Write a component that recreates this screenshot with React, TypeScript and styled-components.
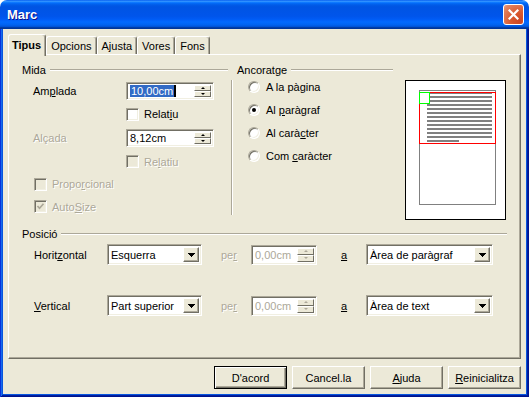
import React from 'react';
import styled, {createGlobalStyle} from 'styled-components';

const GlobalStyle = createGlobalStyle`
  html, body {
    margin: 0;
    padding: 0;
    background: #fff;
  }
  body {
    font-family: "Liberation Sans", Arial, sans-serif;
    font-size: 11px;
    color: #000;
  }
  * {
    box-sizing: border-box;
  }
`

const Window = styled.div`
  width: 529px;
  height: 397px;
  display: flex;
  flex-direction: column;
  border-radius: 7px 7px 0 0;
  overflow: hidden;
`

const TitleBar = styled.div`
  flex: none;
  height: 29px;
  display: flex;
  align-items: center;
  justify-content: space-between;
  padding: 0 5px 0 7px;
  background: linear-gradient(to bottom, #0058ee 0%, #3593ff 4%, #288eff 6%, #127dff 8%, #036ffc 10%, #0262ee 14%, #0057e5 20%, #0054e3 24%, #0055eb 56%, #005bf5 66%, #026afe 76%, #0062ef 86%, #0052d6 92%, #0040ab 94%, #003092 100%);
`

const Title = styled.span`
  color: #fff;
  font-family: "Liberation Sans", Arial, sans-serif;
  font-size: 13px;
  font-weight: 700;
  text-shadow: 1px 1px 0 #0f1089;
  padding-bottom: 1px;
`

const CloseButton = styled.div`
  width: 21px;
  height: 21px;
  display: flex;
  align-items: center;
  justify-content: center;
  border: 1px solid #fff;
  border-radius: 3px;
  background: radial-gradient(circle at 85% 85%, #cc4624 0%, #d9582d 40%, #e38462 85%, #f0a48a 100%);
`

const Frame = styled.div`
  flex: 1;
  display: flex;
  padding: 0 3px 3px 3px;
  background: #0855dd;
  box-shadow: inset 1px 0 #0831d9, inset -1px 0 #00138c, inset 0 -1px #00138c,
  inset 2px 0 #166aee, inset -2px 0 #001ea0, inset 0 -2px #001ea0;
`

const Body = styled.div`
  flex: 1;
  display: flex;
  flex-direction: column;
  padding: 5px;
  background: #ece9d8;
`

const TabStrip = styled.div`
  flex: none;
  height: 20px;
  display: flex;
  align-items: flex-end;
  position: relative;
  z-index: 1;
`

const Tab = styled.div<{ $active?: boolean }>`
  height: ${p => (p.$active ? 22 : 18)}px;
  margin-bottom: ${p => (p.$active ? -2 : 0)}px;
  padding: ${p => (p.$active ? '0 4px 2px 3px' : '0 4px')};
  display: flex;
  align-items: center;
  background: #ece9d8;
  border-top: 1px solid #fff;
  border-left: 1px solid #fff;
  border-right: 1px solid #716f64;
  box-shadow: inset -1px 0 #aca899;
  border-radius: 3px 3px 0 0;
  font-weight: ${p => (p.$active ? 700 : 400)};
`

const Panel = styled.div`
  flex: 1;
  display: flex;
  flex-direction: column;
  padding: 8px 13px 0 13px;
  background: #ece9d8;
  border: 1px solid;
  border-color: #fff #716f64 #716f64 #fff;
  box-shadow: inset -1px -1px #aca899;
`

const TopSection = styled.div`
  display: flex;
  align-items: flex-start;
`

const Group = styled.div<{ $width?: number }>`
  display: flex;
  flex-direction: column;
  width: ${p => (p.$width ? `${p.$width}px` : 'auto')};
`

const GroupHeader = styled.div<{ $indent?: number }>`
  height: 13px;
  display: flex;
  align-items: center;
  gap: 4px;
  padding-left: ${p => p.$indent || 0}px;
`

const EtchedLine = styled.div`
  flex: 1;
  height: 2px;
  border-top: 1px solid #aca899;
  border-bottom: 1px solid #fff;
`

const MidaGrid = styled.div`
  margin-top: 4px;
  display: grid;
  grid-template-columns: 104px 88px;
  grid-template-rows: 22px 24px 24px 23px 22px 23px;
  align-items: center;
`

const FieldCell = styled.div`
  grid-column: 2;
`

const WideCell = styled.div`
  grid-column: 1 / -1;
  padding-left: 12px;
`

const Label = styled.span<{ $disabled?: boolean; $indent?: number }>`
  padding-left: ${p => p.$indent || 0}px;
  color: ${p => (p.$disabled ? '#aca899' : '#000')};
  text-shadow: ${p => (p.$disabled ? '1px 1px 0 #fff' : 'none')};
  white-space: nowrap;
`

const Mn = styled.span`
  text-decoration: underline;
`

const Sunken = styled.div<{ $w: number; $h: number }>`
  width: ${p => p.$w}px;
  height: ${p => p.$h}px;
  display: flex;
  align-items: stretch;
  padding: 2px;
  background: #fff;
  border: 1px solid;
  border-color: #aca899 #fff #fff #aca899;
  box-shadow: inset 1px 1px #716f64, inset -1px -1px #f1efe2;
`

const FieldText = styled.div<{ $disabled?: boolean }>`
  flex: 1;
  display: flex;
  align-items: center;
  padding-left: 1px;
  color: ${p => (p.$disabled ? '#aca899' : '#000')};
  white-space: nowrap;
  overflow: hidden;
`

const Selected = styled.span`
  display: inline-block;
  line-height: 14px;
  padding: 0 1px;
  background: #316ac5;
  color: #fff;
`

const Caret = styled.span`
  display: inline-block;
  width: 2px;
  height: 14px;
  background: #000;
`

const SpinButtons = styled.div`
  width: 17px;
  display: flex;
  flex-direction: column;
`

const SpinArrow = styled.div<{ $down?: boolean; $disabled?: boolean }>`
  flex: 1;
  display: flex;
  align-items: center;
  justify-content: center;
  background: #ece9d8;
  border: 1px solid;
  border-color: #fff #716f64 #716f64 #fff;

  &::after {
    content: '';
    border-left: 2px solid transparent;
    border-right: 2px solid transparent;
    ${p => (p.$down ? 'border-top' : 'border-bottom')}: 2px solid ${p => (p.$disabled ? '#aca899' : '#000')};
  }
`

const DropButton = styled.div`
  width: 16px;
  display: flex;
  align-items: center;
  justify-content: center;
  background: #ece9d8;
  border: 1px solid;
  border-color: #fff #716f64 #716f64 #fff;
  box-shadow: inset -1px -1px #aca899;
`

const CheckRow = styled.div`
  display: flex;
  align-items: center;
  gap: 5px;
`

const CheckBox = styled.span<{ $disabled?: boolean }>`
  width: 13px;
  height: 13px;
  flex: none;
  display: flex;
  align-items: center;
  justify-content: center;
  background: ${p => (p.$disabled ? '#ece9d8' : '#fff')};
  border: 1px solid;
  border-color: #aca899 #fff #fff #aca899;
  box-shadow: inset 1px 1px #716f64, inset -1px -1px #f1efe2;
`

const AnchorGroup = styled(Group)`
  margin-left: 3px;
`

const AnchorBody = styled.div`
  margin-top: 4px;
  height: 135px;
  display: flex;
  flex-direction: column;
  gap: 9px;
  padding-left: 16px;
  border-left: 1px solid #aca899;
  box-shadow: inset 1px 0 #fff;
`

const RadioRow = styled.div`
  height: 14px;
  display: flex;
  align-items: center;
  gap: 6px;
`

const Radio = styled.span<{ $checked?: boolean }>`
  width: 12px;
  height: 12px;
  flex: none;
  display: flex;
  align-items: center;
  justify-content: center;
  border-radius: 50%;
  background: #fff;
  border: 1px solid;
  border-color: #aca899 #fff #fff #aca899;
  box-shadow: inset 1px 1px #716f64, inset -1px -1px #f1efe2;

  &::after {
    content: '';
    display: ${p => (p.$checked ? 'block' : 'none')};
    width: 4px;
    height: 4px;
    border-radius: 50%;
    background: #000;
  }
`

const Preview = styled.div`
  margin: 17px 0 0 12px;
  width: 101px;
  height: 140px;
  background: #fff;
  border: 1px solid #000;
  display: flex;
`

const PositionGroup = styled(Group)`
  margin-top: 7px;
`

const PosGrid = styled.div`
  margin-top: 4px;
  display: grid;
  grid-template-columns: 85px 95px 49px 66px 49px 127px;
  grid-template-rows: 21px 21px;
  row-gap: 30px;
  align-items: center;
`

const ButtonRow = styled.div`
  flex: none;
  height: 23px;
  margin-top: 7px;
  display: flex;
  justify-content: flex-end;
  gap: 5px;
`

const Button = styled.button<{ $default?: boolean }>`
  width: 73px;
  height: 23px;
  padding: 0;
  font: inherit;
  color: #000;
  background: #ece9d8;
  border: 1px solid;
  border-color: ${p => (p.$default ? '#000' : '#fff #716f64 #716f64 #fff')};
  box-shadow: ${p => (p.$default
    ? 'inset 1px 1px #fff, inset -1px -1px #716f64, inset -2px -2px #aca899'
    : 'inset -1px -1px #aca899')};
`

const Arrow = () => (
  <svg width="7" height="4" viewBox="0 0 7 4">
    <polygon points="0,0 7,0 3.5,4" fill="#000" shapeRendering="crispEdges"/>
  </svg>
)

const Check = () => (
  <svg width="9" height="9" viewBox="0 0 9 9">
    <polyline points="1.5,4 3.5,6.2 7.5,1.8" fill="none" stroke="#aca899" strokeWidth="1.7"/>
  </svg>
)

const Spin = ({w, h, disabled, children}: { w: number; h: number; disabled?: boolean; children: React.ReactNode }) => (
  <Sunken $w={w} $h={h}>
    <FieldText $disabled={disabled}>{children}</FieldText>
    <SpinButtons>
      <SpinArrow $disabled={disabled}/>
      <SpinArrow $down $disabled={disabled}/>
    </SpinButtons>
  </Sunken>
)

const Combo = ({w, children}: { w: number; children: React.ReactNode }) => (
  <Sunken $w={w} $h={21}>
    <FieldText>{children}</FieldText>
    <DropButton><Arrow/></DropButton>
  </Sunken>
)

const PageDrawing = () => {
  const lines = Array.from({length: 13}, (_, i) => i)
  return (
    <svg width="99" height="138" viewBox="0 0 99 138">
      <rect x="13.5" y="9.5" width="76" height="114" fill="none" stroke="#808080"/>
      {lines.map(i => (
        <rect key={i} x="21" y={11 + i * 4} width={i === 12 ? 32 : 65} height="2" fill="#808080"/>
      ))}
      <rect x="13.5" y="11.5" width="76" height="51" fill="none" stroke="#ff0000"/>
      <rect x="13.5" y="11.5" width="10" height="11" fill="#fff" stroke="#00ff00"/>
    </svg>
  )
}

export default function App() {
  return (
    <>
      <GlobalStyle/>
      <Window>
        <TitleBar>
          <Title>Marc</Title>
          <CloseButton>
            <svg width="11" height="11" viewBox="0 0 11 11">
              <path d="M1.5 1.5 L9.5 9.5 M9.5 1.5 L1.5 9.5" stroke="#fff" strokeWidth="2.2" strokeLinecap="square"/>
            </svg>
          </CloseButton>
        </TitleBar>
        <Frame>
          <Body>
            <TabStrip>
              <Tab $active>Tipus</Tab>
              <Tab>Opcions</Tab>
              <Tab>Ajusta</Tab>
              <Tab>Vores</Tab>
              <Tab>Fons</Tab>
            </TabStrip>
            <Panel>
              <TopSection>
                <Group $width={206}>
                  <GroupHeader>
                    <span>Mida</span>
                    <EtchedLine/>
                  </GroupHeader>
                  <MidaGrid>
                    <Label $indent={11}>Am<Mn>p</Mn>lada</Label>
                    <Spin w={88} h={18}><Selected>10,00cm</Selected><Caret/></Spin>
                    <FieldCell>
                      <CheckRow>
                        <CheckBox/>
                        <Label>Relat<Mn>i</Mn>u</Label>
                      </CheckRow>
                    </FieldCell>
                    <Label $indent={11} $disabled>Alçada</Label>
                    <Spin w={88} h={18}>8,12cm</Spin>
                    <FieldCell>
                      <CheckRow>
                        <CheckBox $disabled/>
                        <Label $disabled>Re<Mn>l</Mn>atiu</Label>
                      </CheckRow>
                    </FieldCell>
                    <WideCell>
                      <CheckRow>
                        <CheckBox $disabled/>
                        <Label $disabled>Propo<Mn>r</Mn>cional</Label>
                      </CheckRow>
                    </WideCell>
                    <WideCell>
                      <CheckRow>
                        <CheckBox $disabled><Check/></CheckBox>
                        <Label $disabled>Auto<Mn>S</Mn>ize</Label>
                      </CheckRow>
                    </WideCell>
                  </MidaGrid>
                </Group>
                <AnchorGroup $width={162}>
                  <GroupHeader $indent={6}>
                    <span>Ancoratge</span>
                    <EtchedLine/>
                  </GroupHeader>
                  <AnchorBody>
                    <RadioRow><Radio/><Label>A la pà<Mn>g</Mn>ina</Label></RadioRow>
                    <RadioRow><Radio $checked/><Label>Al <Mn>p</Mn>aràgraf</Label></RadioRow>
                    <RadioRow><Radio/><Label>Al carà<Mn>c</Mn>ter</Label></RadioRow>
                    <RadioRow><Radio/><Label>Com <Mn>c</Mn>aràcter</Label></RadioRow>
                  </AnchorBody>
                </AnchorGroup>
                <Preview>
                  <PageDrawing/>
                </Preview>
              </TopSection>
              <PositionGroup>
                <GroupHeader>
                  <span>Posició</span>
                  <EtchedLine/>
                </GroupHeader>
                <PosGrid>
                  <Label $indent={12}>Horit<Mn>z</Mn>ontal</Label>
                  <Combo w={95}>Esquerra</Combo>
                  <Label $indent={19} $disabled>pe<Mn>r</Mn></Label>
                  <Spin w={66} h={20} disabled>0,00cm</Spin>
                  <Label $indent={24}><Mn>a</Mn></Label>
                  <Combo w={127}>Àrea de paràgraf</Combo>

                  <Label $indent={12}><Mn>V</Mn>ertical</Label>
                  <Combo w={95}>Part superior</Combo>
                  <Label $indent={19} $disabled>pe<Mn>r</Mn></Label>
                  <Spin w={66} h={20} disabled>0,00cm</Spin>
                  <Label $indent={24}><Mn>a</Mn></Label>
                  <Combo w={127}>Àrea de text</Combo>
                </PosGrid>
              </PositionGroup>
            </Panel>
            <ButtonRow>
              <Button $default>D'acord</Button>
              <Button>Cancel.la</Button>
              <Button><Mn>A</Mn>juda</Button>
              <Button><Mn>R</Mn>einicialitza</Button>
            </ButtonRow>
          </Body>
        </Frame>
      </Window>
    </>
  )
}
